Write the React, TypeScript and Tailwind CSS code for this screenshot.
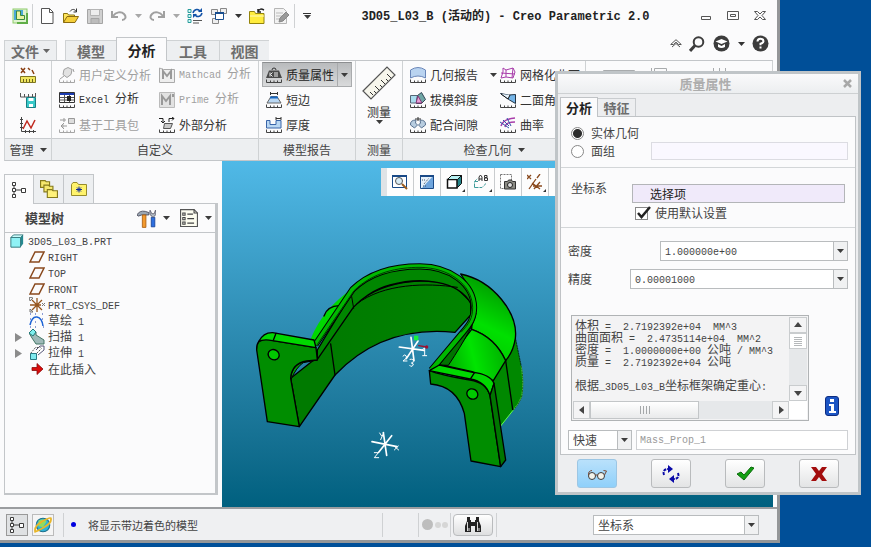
import React from "react";

const LATIN = "font-['Liberation_Mono',monospace]";

/* Latin runs are set in a smaller monospace so two letters fill one CJK cell. */
function Mix({ text, latin = "text-[10px]" }: { text: string; latin?: string }) {
  const runs = text.match(/[\u2e80-\uffef]+|[^\u2e80-\uffef]+/g) ?? [];
  return (
    <span className="whitespace-pre">
      {runs.map((run, i) =>
        /[\u2e80-\uffef]/.test(run) ? (
          <span key={i}>{run}</span>
        ) : (
          <span key={i} className={`${LATIN} ${latin}`}>{run}</span>
        )
      )}
    </span>
  );
}

function Caret({ className = "text-[#3c3c3c]" }: { className?: string }) {
  return (
    <svg width="7" height="4" viewBox="0 0 7 4" className={`shrink-0 ${className}`} aria-hidden="true">
      <path d="M0 0h7L3.5 4z" fill="currentColor" />
    </svg>
  );
}

function Icon({ children, size = 16 }: { children: React.ReactNode; size?: number }) {
  return (
    <svg width={size} height={size} viewBox="0 0 16 16" fill="none" className="shrink-0" aria-hidden="true">
      {children}
    </svg>
  );
}

/* Small graduated base line shared by all analysis icons. */
const Scale = ({ c = "#444" }: { c?: string }) => (
  <path d="M.5 12.5v3h15v-3M4.5 13.5v2M8 13.5v2M11.5 13.5v2" stroke={c} strokeWidth="1" />
);

const I = {
  logo: (
    <Icon>
      <rect x="1" y="1" width="14" height="14" fill="#dff3d0" stroke="#8ecb6b" />
      <rect x="2" y="2" width="9" height="10" fill="#4aa8d8" />
      <path d="M4.500 3v8.500h8v-4h-4v-4.500z" fill="#e8f3a0" stroke="#3a8a3f" />
      <path d="M15 5v10H5" stroke="#5fae47" strokeWidth="2" />
    </Icon>
  ),
  newFile: (
    <Icon>
      <path d="M2.500.5h8l3.500 3.500v11.500h-11.500z" fill="#fff" stroke="#555" />
      <path d="M10.500.5v4h3.500" stroke="#555" />
    </Icon>
  ),
  open: (
    <Icon>
      <path d="M.5 14.500v-9h4l1 1.500h6v2" fill="#ffe65c" stroke="#8b7410" />
      <path d="M.5 14.500l3.500-6h11.500l-3.500 6z" fill="#f5cf3a" stroke="#8b6b10" />
      <path d="M7 3.500c2-3 5-2.500 6 0M13.500.5v3.500h-3" stroke="#333" />
    </Icon>
  ),
  save: (
    <Icon>
      <path d="M.5 1.500h15v14h-15z" fill="#d0d0d0" stroke="#a5a5a5" />
      <path d="M3.500 1.500h9v6h-9z" fill="#eee" stroke="#b5b5b5" />
      <path d="M4 10.500h8v5h-8z" fill="#bcbcbc" stroke="#a5a5a5" />
    </Icon>
  ),
  undo: (
    <Icon>
      <path d="M1 3v6h6" stroke="#a0a0a0" strokeWidth="2" />
      <path d="M2 8c3-4 8-5 11-2s1 6-2 6" stroke="#a0a0a0" strokeWidth="2" />
    </Icon>
  ),
  redo: (
    <Icon>
      <path d="M15 3v6h-6" stroke="#a0a0a0" strokeWidth="2" />
      <path d="M14 8c-3-4-8-5-11-2s-1 6 2 6" stroke="#a0a0a0" strokeWidth="2" />
    </Icon>
  ),
  regen: (
    <Icon>
      <path d="M1 1.500h3v3h-3zM1 6.500h3v3h-3zM1 11.500h3v3h-3z" fill="#d7fbfb" stroke="#2a9b9b" />
      <path d="M6 12.500h9M6 15h6" stroke="#555" />
      <path d="M6 5c1-4 6-5 7-1M15 5c-1 4-6 5-7 1" stroke="#1353a8" strokeWidth="1.500" />
      <path d="M11 4h4v-4zM10 6h-4v4z" fill="#1353a8" />
    </Icon>
  ),
  windows: (
    <Icon>
      <path d="M.5 1.500h6v5h-6zM9.500.5h6v5h-6zM1.500 10.500h6v5h-6z" fill="#eee" stroke="#888" />
      <path d="M4.500 4.500h8v7h-8z" fill="#fff" stroke="#174d8f" />
      <path d="M4 5h9" stroke="#174d8f" strokeWidth="2" />
    </Icon>
  ),
  folder: (
    <Icon>
      <path d="M.5 15.500v-12h5l1 2h8.500v10z" fill="#ffec3d" stroke="#94840c" />
      <path d="M1 8h14" stroke="#fffbc0" />
      <path d="M9 4c1-4 4-3 6-2M9 1v3h3" stroke="#222" strokeWidth="1.500" />
    </Icon>
  ),
  edit: (
    <Icon>
      <path d="M1.500.5h9l3 3v12h-12z" fill="#f2f2f2" stroke="#b5b5b5" />
      <path d="M3 5h7M3 8h6M3 11h4" stroke="#bbb" />
      <path d="M6 14l1-4 6-6 3 3-6 6z" fill="#999" stroke="#888" />
    </Icon>
  ),
  angleRuler: (
    <Icon>
      <path d="M1 1l4 5M5 1l-4 5M8 1l2 2M12 3l2 4" stroke="#8a3f12" strokeWidth="1.500" />
      <path d="M.5 9.500h15v6h-15z" fill="#f0e65e" stroke="#7e7620" />
      <path d="M3.500 12v3M6.500 12v3M9.500 12v3M12.500 12v3" stroke="#6a6320" />
    </Icon>
  ),
  rulerSave: (
    <Icon>
      <path d="M.5 1v4h15v-4M4.500 2v3M8.500 2v3M12.500 2v3" stroke="#555" />
      <path d="M6.500 5.500h9v10h-9z" fill="#38c9c9" stroke="#187f83" />
      <path d="M8.500 6h5v3h-5zM9 12h4v3h-4z" fill="#fff" />
    </Icon>
  ),
  graph: (
    <Icon>
      <path d="M1.500 0v14.500h14.500M0 2.500h3M0 6.500h3M0 10.500h3M5.500 13v3M9.500 13v3M13.500 13v3" stroke="#444" />
      <path d="M3 12l4-8 4 7 4-8" stroke="#c02a20" strokeWidth="1.500" />
    </Icon>
  ),
  userDef: (
    <Icon>
      <path d="M5 2.500l4-2 4 2-1 5-4 3-4-3zM5 9l-4 3M14 2l1 3" fill="#e2e2e2" stroke="#a0a0a0" />
      <Scale c="#a5a5a5" />
    </Icon>
  ),
  excel: (
    <Icon>
      <path d="M.5.5h15v10h-15z" fill="#fff" stroke="#333" />
      <path d="M1 2h14" stroke="#1b3bb0" strokeWidth="2" />
      <path d="M1 5.500h14M1 8h14M5.500 3v7M10.500 3v7" stroke="#555" />
      <path d="M8 4h4v5h-4z" fill="#222" />
      <Scale />
    </Icon>
  ),
  toolkit: (
    <Icon>
      <path d="M9.500 1.500h6v5h-6zM8 9h-6M5 6L2 9l3 3M1 3h6M5 1v4" fill="#ddd" stroke="#999" />
      <Scale c="#a5a5a5" />
    </Icon>
  ),
  mathcad: (
    <Icon>
      <path d="M.5 1v14.500h15v-13h-11z" fill="#eee" stroke="#aaa" />
      <path d="M4 12v-8l4 5 4-5v8" stroke="#999" strokeWidth="2" />
    </Icon>
  ),
  prime: (
    <Icon>
      <path d="M.5.5h15v15h-15z" fill="#e2e2e2" stroke="#bbb" />
      <path d="M3 13v-9l4 5 4-5v9M14 2v3" stroke="#999" strokeWidth="2" />
    </Icon>
  ),
  external: (
    <Icon>
      <path d="M5.500 6.500h8l-2 5h-7z" fill="#c9c9c9" stroke="#555" />
      <path d="M0 1.500h4v4M2 4l2 2 2-2M10 5v-3.500h5M13 0l2 1.500-2 2" stroke="#222" />
      <Scale />
    </Icon>
  ),
  mass: (
    <Icon>
      <path d="M6 3a2 2 0 014 0" stroke="#333" />
      <path d="M3 3.500h10l3 7.500h-16z" fill="#4a4a4a" />
      <path d="M4 5.500v4M6.500 5.500l-2 2 2 2M9 5v5M11 5v5" stroke="#eee" />
      <Scale />
    </Icon>
  ),
  shortEdge: (
    <Icon>
      <path d="M4.500 0v3M11.500 0v3M4.500 1.500h7" stroke="#333" />
      <path d="M5 4.500h6l4 6.500h-14z" fill="#b9d7f3" stroke="#666" />
      <path d="M4 5.500h8" stroke="#1668c4" strokeWidth="2" />
      <Scale />
    </Icon>
  ),
  thick: (
    <Icon>
      <path d="M.5 3.500h3.500v4h6v-4h5v7.500h-14.500z" fill="#b9d7f3" stroke="#3864a8" />
      <path d="M10 0v3M15 0v3M10 1.500h5" stroke="#333" />
      <Scale />
    </Icon>
  ),
  geomReport: (
    <Icon>
      <path d="M.5 11v-8q7.500-5 15 0v8q-7.500-4-15 0z" fill="#b9d3f0" stroke="#6a86b8" />
      <Scale />
    </Icon>
  ),
  draft: (
    <Icon>
      <path d="M.5 3.500h7l-1 7.500h-6z" fill="#a9dcee" stroke="#567" />
      <path d="M7.500 3.500l4-3 4 7-4 4h-5z" fill="#6fa6a5" stroke="#345" />
      <path d="M8 4l4 7h-6z" fill="#e9a1d6" stroke="#833a78" />
      <Scale />
    </Icon>
  ),
  clearance: (
    <Icon>
      <path d="M6 3q-6 0-5.500 5l4 3 3-3-2-2zM10 3q6 0 5.500 5l-4 3-3-3 2-2z" fill="#b8cde0" stroke="#5a7290" />
      <path d="M8 0v4M5 2h6" stroke="#333" />
      <Scale />
    </Icon>
  ),
  mesh: (
    <Icon>
      <path d="M3 1l3 2 7-2 2 4-2 6-7-1-5 1 2-6zM6 3v7M1 6l14 1M13 1l-1 10" stroke="#a83caa" />
      <Scale />
    </Icon>
  ),
  dihedral: (
    <Icon>
      <path d="M.5 1.500l8 1.500 7-.500v9l-6-3.500z" fill="#75b5e8" stroke="#234" />
      <path d="M1 2l7 5 2-4" fill="#e5f2fc" stroke="#111" />
      <Scale />
    </Icon>
  ),
  curve: (
    <Icon>
      <path d="M15 1Q3 2 1 9M15 5Q6 5 5 10" stroke="#a83caa" strokeWidth="1.500" />
      <path d="M0 5l9 6M3 3l6 6M7 1l4 8" stroke="#3052a8" />
      <Scale />
    </Icon>
  ),
  tree: (
    <Icon>
      <path d="M1.500.5h3v3h-3zM1.500 6.500h3v3h-3zM1.500 12.500h3v3h-3zM10.500 6.500h4v4h-4z" fill="#fff" stroke="#3a3a3a" />
      <path d="M3 3.500v3M3 9.500v3M4.500 8h6" stroke="#3a3a3a" />
    </Icon>
  ),
  folders: (
    <Icon size={18}>
      <path d="M.5.5h4l1 1h3v5h-8z" fill="#f6e96e" stroke="#857a1c" />
      <path d="M3.500 4.500h4l1 1h3v5h-8z" fill="#f6e96e" stroke="#857a1c" />
      <path d="M6.500 8.500h4l1 1h4v6h-9z" fill="#fff27a" stroke="#857a1c" />
    </Icon>
  ),
  favFolder: (
    <Icon>
      <path d="M.5 14.500v-11l1.500-2h4l1.500 2h8v11z" fill="#fff36b" stroke="#978c2b" />
      <path d="M8 5.500v6M5 8.500h6M6 6.500l4 4M10 6.500l-4 4" stroke="#102a9c" />
    </Icon>
  ),
  tools: (
    <Icon size={19}>
      <path d="M0 5q2-4 7-3l3 1v2h-6l-3 1z" fill="#9aa6b2" stroke="#445" strokeWidth=".7" />
      <path d="M4.500 5h3v10.500h-3z" fill="#f39a2d" stroke="#a85b0e" strokeWidth=".7" />
      <path d="M12 7h3v8h-3z" fill="#2d6fdf" stroke="#123f96" strokeWidth=".7" />
      <path d="M11 1q-1 4 2.500 6q3.500-2 2-6l-1 3h-2z" fill="#b6bec7" stroke="#556" strokeWidth=".7" />
    </Icon>
  ),
  list: (
    <Icon size={18}>
      <path d="M.5.5h12l3 3v12h-15z" fill="#fdfdf0" stroke="#555" />
      <path d="M12.500.5v3h3M6.500 4.500h5M6.500 8.500h6M6.500 12.500h6" stroke="#444" />
      <path d="M2.500 3.500h2v2h-2zM2.500 7.500h2v2h-2zM2.500 11.500h2v2h-2z" stroke="#444" />
    </Icon>
  ),
  part: (
    <Icon size={14}>
      <path d="M1 4l3-3h11v10l-3 4H1z" fill="#25888f" />
      <path d="M1 4h11v11H1z" fill="#8ff2f5" stroke="#33777c" />
      <path d="M1 4l3-3h11l-3 3z" fill="#c9fbfb" stroke="#33777c" />
    </Icon>
  ),
  plane: (
    <Icon>
      <path d="M1 13L6 3h9l-5 10z" stroke="#8a4a1e" strokeWidth="1.500" />
    </Icon>
  ),
  csys: (
    <Icon>
      <path d="M8 1v14M1 8h11M3 13L13 3M3 3l10 10" stroke="#96561f" strokeWidth="1.300" />
      <path d="M0 0l4 1-3 3zM1 15v-3l3 3zM13 6l3 3M16 6l-3 3" stroke="#777" />
    </Icon>
  ),
  sketch: (
    <Icon>
      <path d="M1 12Q3 3 8 4t6 9" stroke="#1c63d6" strokeWidth="1.500" />
      <path d="M1 1h1M6 1h1M13 1h1M1 6h1M13 6h1M6 9h1M1 14h1M6 14h1M14 14h1" stroke="#1c3fb0" />
    </Icon>
  ),
  sweep: (
    <Icon>
      <path d="M0 4l4-4 3 3v3l8 5v4h-8l-4-6z" fill="#9fb9b8" stroke="#476" />
      <path d="M0 4l4-4 3 3-3 4z" fill="#7ff0ee" stroke="#277" />
    </Icon>
  ),
  extrude: (
    <Icon>
      <path d="M7 5l4-4h4v4l-6 5" fill="#fff" stroke="#557" />
      <path d="M1.500 8.500h6v6h-6z" fill="#7fe9ee" stroke="#267b86" />
      <path d="M1.500 8.500l5-6h5M7.500 8.500l5-5" stroke="#555" strokeDasharray="2 1" />
    </Icon>
  ),
  insert: (
    <Icon>
      <path d="M3 6.500h5v-4l6 5.500-6 5.500v-4h-5z" fill="#d90d0d" stroke="#8a0a0a" strokeWidth=".8" />
    </Icon>
  ),
  globe: (
    <Icon size={18}>
      <circle cx="8" cy="8" r="6" fill="#2fb3d8" stroke="#1b6f8c" />
      <path d="M4 4q5-2 7 1l-3 5-4-1z" fill="#8fdc60" />
      <path d="M1 14Q0 9 7 5t8-3Q16 6 9 10t-8 4z" stroke="#e8b62a" strokeWidth="1.600" />
    </Icon>
  ),
  zoom: (
    <Icon>
      <path d="M.5 1.500h14v12h-14z" fill="#fff" stroke="#1a4a87" />
      <path d="M0 2h15" stroke="#1a4a87" strokeWidth="2" />
      <circle cx="7" cy="7" r="3.500" fill="#d9ecf5" stroke="#555" />
      <path d="M10 10l5 5" stroke="#9c5d1e" strokeWidth="2" />
    </Icon>
  ),
  refit: (
    <Icon>
      <path d="M1.500 1.500h13v13h-13z" fill="#e6f1fb" stroke="#1a4a87" />
      <path d="M14 2v12H3z" fill="#6fa5dd" />
      <path d="M5 10l5-6M3 6h3M4 12h3" stroke="#456" strokeDasharray="1 1" />
      <path d="M1 2h14" stroke="#1a4a87" strokeWidth="2" />
    </Icon>
  ),
  cube: (
    <Icon>
      <path d="M1.500 5.500l4-4h10v8l-4 4z" fill="#258489" stroke="#111" />
      <path d="M1.500 5.500h9.500v8.500H1.500z" fill="#fff" stroke="#111" strokeWidth="1.500" />
      <path d="M1.500 5.500l4-4h10l-4 4z" fill="#b7f1f2" stroke="#111" />
    </Icon>
  ),
  viewAB: (
    <Icon>
      <path d="M1.500 13.500v-6l3-3M1.500 13.500h7.500l4-4M2 7.500h3" stroke="#3f9c9a" strokeDasharray="4 1" />
      <path d="M6 7v-4l1.500-2L9 3v4M6 5h3M11.500 1.500h2.500v2h-2.500zM11.500 4h3v2.500h-3z" stroke="#333" />
    </Icon>
  ),
  camera: (
    <Icon>
      <path d="M.5.5h11v14h-11z" fill="#fff" stroke="#777" strokeDasharray="2 1" />
      <path d="M4.500 7.500h3l1-1.500h3l1 1.500h3v7.500h-11z" fill="#8b8b84" stroke="#333" />
      <circle cx="10" cy="11" r="2.500" fill="#ddd" stroke="#222" />
    </Icon>
  ),
  datum: (
    <Icon>
      <path d="M0 1l4 4M4 1L0 5M13 0l-3 4M9 5L2 15M5 9l8 6M13 8l-6 7M6 12h9" stroke="#8a4a1e" strokeWidth="1.300" />
    </Icon>
  ),
};

type Tool = { icon: React.ReactNode; label: string; off?: boolean; caret?: boolean };

function ToolRow({ icon, label, off, caret }: Tool) {
  return (
    <button type="button" className={`flex h-[25px] items-center gap-1 leading-4 ${off ? "text-[#a0a0a0]" : "text-[#333]"}`}>
      {icon}
      <Mix text={label} />
      {caret && <span className="pl-2"><Caret /></span>}
    </button>
  );
}

function Group({ title, caret, className, children }: { title: string; caret?: boolean; className: string; children?: React.ReactNode }) {
  return (
    <section className={`flex shrink-0 flex-col border-r border-[#cfd2d4] ${className}`}>
      <div className="h-[77px] pt-px">{children}</div>
      <div className="flex h-[22px] items-center justify-center gap-[6px] border-t border-[#c9cccf] bg-[#edeff1] text-[#444]">
        {title}
        {caret && <Caret />}
      </div>
    </section>
  );
}

function Combo({ value, className, label, id, latin }: { value: string; className: string; label: string; id: string; latin?: boolean }) {
  return (
    <div className={`relative h-5 border border-[#b9bcbe] bg-white ${className}`}>
      <select id={id} aria-label={label} className={`h-full w-full appearance-none bg-transparent pl-1 text-[#444] outline-none ${latin ? `${LATIN} text-[10px]` : "text-xs leading-4"}`}>
        <option>{value}</option>
      </select>
      <span className="pointer-events-none absolute inset-y-0 right-0 flex w-[14px] items-center justify-center border-l border-[#b9bcbe] bg-[#f0f1f2]">
        <Caret />
      </span>
    </div>
  );
}

function QuickButton({ label, children }: { label: string; children: React.ReactNode }) {
  return <button type="button" aria-label={label} className="flex w-6 justify-center">{children}</button>;
}
function QuickCaret({ off }: { off?: boolean }) {
  return (
    <button type="button" aria-label="更多" className="flex w-[14px] justify-center">
      <Caret className={off ? "text-[#a8a8a8]" : "text-[#333]"} />
    </button>
  );
}

function TitleBar() {
  return (
    <header className="flex h-[31px] items-center pr-1 pl-[7px]">
      <span className="flex w-[25px] justify-center">{I.logo}</span>
      <span className="mr-[2px] h-6 w-px bg-[#cfd1d3]" />
      <QuickButton label="新建">{I.newFile}</QuickButton>
      <QuickButton label="打开">{I.open}</QuickButton>
      <QuickButton label="保存">{I.save}</QuickButton>
      <QuickButton label="撤消">{I.undo}</QuickButton>
      <QuickCaret off />
      <QuickButton label="重做">{I.redo}</QuickButton>
      <QuickCaret off />
      <QuickButton label="重新生成">{I.regen}</QuickButton>
      <QuickButton label="窗口">{I.windows}</QuickButton>
      <QuickCaret />
      <QuickButton label="关闭">{I.folder}</QuickButton>
      <QuickButton label="编辑">{I.edit}</QuickButton>
      <span className="ml-px h-6 w-px bg-[#cfd1d3]" />
      <button type="button" aria-label="自定义工具栏" className="flex w-6 flex-col items-center gap-px">
        <span className="h-px w-2 bg-[#333]" />
        <Caret />
      </button>
      <h1 className="flex-1 text-center font-bold whitespace-nowrap text-[#222]">
        <Mix text="3D05_L03_B (活动的) - Creo Parametric 2.0" latin="text-xs" />
      </h1>
      <button type="button" aria-label="最小化" className="flex w-[27px] justify-center">
        <svg width="12" height="12" fill="none" stroke="#555"><path d="M1.500 6.500h9v3h-9z" /></svg>
      </button>
      <button type="button" aria-label="最大化" className="flex w-[27px] justify-center">
        <svg width="12" height="12" fill="none" stroke="#555"><path d="M.5 1.500h11v8h-11zM3.500 4.500h5v2h-5z" /></svg>
      </button>
      <button type="button" aria-label="关闭窗口" className="flex w-[27px] justify-center">
        <svg width="12" height="12" fill="none" stroke="#555"><path d="M.5 1.500h3L6 4l2.500-2.500h3L8 5.500l3.500 4h-3L6 7 3.500 9.500h-3l3.500-4z" /></svg>
      </button>
    </header>
  );
}

function RibbonTabs() {
  const tab = "flex h-5 items-center justify-center border-t border-[#cfd2d4] bg-[#edeff1] text-sm leading-4 font-bold text-[#6e6e6e]";
  return (
    <nav className="flex h-[29px] items-end justify-between px-1">
      <div className="flex items-end" role="tablist">
        <button type="button" role="tab" className={`${tab} mr-2 w-[53px] gap-1 border-x`}>
          文件<Caret className="text-[#666]" />
        </button>
        <button type="button" role="tab" className={`${tab} w-[51px] border-l`}>模型</button>
        <button type="button" role="tab" aria-selected="true" className="z-10 -mb-px flex h-6 w-[51px] items-center justify-center border border-b-0 border-[#c3c6c9] bg-[#fbfbfc] text-sm leading-4 font-bold text-[#222]">分析</button>
        <button type="button" role="tab" className={`${tab} w-[52px]`}>工具</button>
        <button type="button" role="tab" className={`${tab} w-[50px] border-l`}>视图</button>
      </div>
      <div className="flex items-center self-start pt-1 text-[#333]">
        <button type="button" aria-label="折叠功能区" className="flex w-5 justify-center">
          <svg width="12" height="9" fill="none" stroke="#555"><path d="M.7 5.500L6 .7l5.300 4.800H8.500L6 3.200 3.500 5.500zM2 8l4-3.500L10 8" /></svg>
        </button>
        <button type="button" aria-label="搜索" className="flex w-[22px] justify-center">
          <svg width="16" height="16" fill="none" stroke="#3c3c3c"><circle cx="9.500" cy="6" r="4.800" strokeWidth="2" /><path d="M6 9.500L1 15" strokeWidth="3" /></svg>
        </button>
        <button type="button" aria-label="学习" className="flex w-[26px] justify-center">
          <svg width="17" height="17"><circle cx="8.500" cy="8.500" r="8" fill="#3c3c3c" /><path d="M2.500 6.500L8.500 4l6 2.500L8.500 9z" fill="#fff" /><path d="M5 9v3q3.500 2 7 0V9L8.500 11z" fill="#fff" /></svg>
        </button>
        <QuickCaret />
        <button type="button" aria-label="帮助" className="flex w-[25px] justify-center">
          <svg width="17" height="17"><circle cx="8.500" cy="8.500" r="8" fill="#3c3c3c" /><path d="M5.500 6.500Q5.500 3.700 8.500 3.700t3 2.600Q11.500 8 8.500 8.800v1.400" fill="none" stroke="#fff" strokeWidth="2" /><path d="M7.500 11.500h2v2h-2z" fill="#fff" /></svg>
        </button>
      </div>
    </nav>
  );
}

function Ribbon() {
  return (
    <div className="mx-1 flex overflow-hidden border border-t-[#c3c6c9] border-r-[#cfd2d4] border-b-[#c3c6c9] border-l-[#cfd2d4]">
      <Group title="管理" caret className="w-[47px]">
        <div className="flex flex-col items-center">
          {[I.angleRuler, I.rulerSave, I.graph].map((icon, i) => (
            <button type="button" key={i} aria-label={["测量历史", "保存分析", "图形"][i]} className="flex h-[25px] items-center">{icon}</button>
          ))}
        </div>
      </Group>
      <Group title="自定义" className="w-[207px]">
        <div className="grid grid-cols-[100px_1fr] pl-[7px]">
          <ToolRow icon={I.userDef} label="用户定义分析" off />
          <ToolRow icon={I.mathcad} label="Mathcad 分析" off />
          <ToolRow icon={I.excel} label="Excel 分析" />
          <ToolRow icon={I.prime} label="Prime 分析" off />
          <ToolRow icon={I.toolkit} label="基于工具包" off />
          <ToolRow icon={I.external} label="外部分析" />
        </div>
      </Group>
      <Group title="模型报告" className="w-[97px]">
        <div className="flex flex-col px-[3px]">
          <div className="flex h-[25px] border border-[#a9abad] border-t-[#8c8e90] bg-linear-to-b from-[#b9bbbd] to-[#d9dadb]">
            <button type="button" className="flex flex-1 items-center gap-1 pl-[3px] text-[#222]">
              {I.mass}<span>质量属性</span>
            </button>
            <button type="button" aria-label="质量属性选项" className="flex w-[14px] items-center justify-center border-l border-[#a9abad]"><Caret /></button>
          </div>
          <div className="pl-1">
            <ToolRow icon={I.shortEdge} label="短边" />
            <ToolRow icon={I.thick} label="厚度" />
          </div>
        </div>
      </Group>
      <Group title="测量" className="w-[47px]">
        <button type="button" className="flex w-full flex-col items-center pt-1 leading-4 text-[#333]">
          <svg width="34" height="34" viewBox="0 0 34 34" fill="none">
            <path d="M1 25L25 1l8 8L9 33z" fill="#f7f6ec" stroke="#555" strokeWidth="1.200" />
            <path d="M9 27l-3-3M12 25l-2-2M15 22l-4-4M18 19l-2-2M21 16l-4-4M24 13l-2-2M27 10l-4-4" transform="translate(2 2)" stroke="#333" />
          </svg>
          <span className="pt-1">测量</span>
          <Caret />
        </button>
      </Group>
      <Group title="检查几何" caret className="w-[183px]">
        <div className="grid grid-cols-[90px_1fr] pl-[7px]">
          <ToolRow icon={I.geomReport} label="几何报告" caret />
          <ToolRow icon={I.mesh} label="网格化曲面" />
          <ToolRow icon={I.draft} label="拔模斜度" />
          <ToolRow icon={I.dihedral} label="二面角" />
          <ToolRow icon={I.clearance} label="配合间隙" />
          <ToolRow icon={I.curve} label="曲率" caret />
        </div>
      </Group>
      <Group title="设计研究" className="w-[188px]">
        <svg width="180" height="32" fill="none" stroke="#a8abad" aria-hidden="true">
          <path d="M17.500 8.500h31v18h-31zM65.500 6v20M68.500 6.500h12v18h-12zM72 9.500h8M127.500 6v20M133.500 6v20M139.500 6v20" />
        </svg>
      </Group>
    </div>
  );
}

const treeRows = [
  { icon: I.plane, text: "RIGHT" },
  { icon: I.plane, text: "TOP" },
  { icon: I.plane, text: "FRONT" },
  { icon: I.csys, text: "PRT_CSYS_DEF" },
  { icon: I.sketch, text: "草绘 1" },
  { icon: I.sweep, text: "扫描 1", open: true },
  { icon: I.extrude, text: "拉伸 1", open: true },
  { icon: I.insert, text: "在此插入" },
];

function ModelTree() {
  const side = "flex w-[30px] items-center justify-center border-t border-r border-[#c3c6c9]";
  return (
    <aside className="flex w-[222px] shrink-0 flex-col px-1 pt-[13px] pb-3">
      <div className="flex h-[29px]">
        <button type="button" aria-label="模型树" className={`${side} z-10 -mb-px border-l bg-[#fbfbfc]`}>{I.tree}</button>
        <button type="button" aria-label="文件夹浏览器" className={`${side} bg-[#edeff1]`}>{I.folders}</button>
        <button type="button" aria-label="收藏夹" className={`${side} bg-[#edeff1]`}>{I.favFolder}</button>
      </div>
      <div className="flex-1 border border-r-[3px] border-b-2 border-[#c3c6c9] bg-[#fbfbfc]">
        <div className="flex h-[29px] items-center border-b border-[#c3c6c9] pr-[3px] pl-5">
          <h2 className="flex-1 text-[13px] leading-4 font-bold text-[#444]">模型树</h2>
          <button type="button" aria-label="设置" className="flex items-center gap-[7px]">{I.tools}<Caret /></button>
          <button type="button" aria-label="显示" className="ml-[10px] flex items-center gap-[7px]">{I.list}<Caret /></button>
        </div>
        <ul className="leading-4 text-[#444]">
          <li className="flex h-4 items-center gap-1 pl-[5px]">{I.part}<Mix text="3D05_L03_B.PRT" /></li>
          {treeRows.map((r) => (
            <li key={r.text} className="flex h-4 items-center pl-[10px]">
              <span className="flex w-[14px]">
                {r.open && <svg width="7" height="9"><path d="M0 0l7 4.500L0 9z" fill="#8c8c8c" /></svg>}
              </span>
              {r.icon}
              <span className="pl-[3px]"><Mix text={r.text} /></span>
            </li>
          ))}
        </ul>
      </div>
    </aside>
  );
}

function Model() {
  return (
    <svg width="551" height="346" viewBox="0 0 551 346" fill="none" className="block" role="img" aria-label="3D05_L03_B">
      <defs>
        <linearGradient id="bend" x1="690" y1="330" x2="790" y2="130" gradientUnits="userSpaceOnUse">
          <stop offset="0" stopColor="#00c400" />
          <stop offset=".5" stopColor="#00e000" />
          <stop offset="1" stopColor="#00a400" />
        </linearGradient>
        <linearGradient id="wall" x1="250" y1="0" x2="690" y2="0" gradientUnits="userSpaceOnUse">
          <stop offset="0" stopColor="#007a00" />
          <stop offset="1" stopColor="#008400" />
        </linearGradient>
        <linearGradient id="lower" x1="620" y1="340" x2="780" y2="300" gradientUnits="userSpaceOnUse">
          <stop offset="0" stopColor="#00a800" />
          <stop offset=".5" stopColor="#00e400" />
          <stop offset="1" stopColor="#00b800" />
        </linearGradient>
      </defs>
      <g transform="translate(18 89) scale(.33333)" stroke="#000" strokeWidth="4" strokeLinejoin="round" strokeLinecap="round">
        <path d="M335 118Q250 175 212 267L224 272L335 120z" fill="#00d800" stroke="none" />
        <path d="M252 198Q262 168 298 167" />
        <path d="M826 262L844 350Q852 400 845 440Q838 460 820 480L782 528L740 400z" fill="#008800" stroke="none" />
        <path d="M844 350Q852 400 845 440Q838 460 820 480L782 528" stroke="#5dff4c" strokeWidth="3" />
        <path d="M826 262L844 350Q852 400 845 440Q838 460 820 480" strokeWidth="2" strokeDasharray="4 4" />
        <path d="M662 72C760 92 835 190 826 265Q820 305 797 332Q765 262 695 238L700 130z" fill="url(#bend)" />
        <path d="M695 238Q765 262 797 332L760 392L700 366L612 346z" fill="url(#lower)" />
        <path d="M797 332L818 478" />
        <path d="M228 325L340 170C420 90 560 80 640 105L692 155L692 195L645 247C500 232 380 275 285 375L178 530L152 385z" fill="url(#wall)" />
        <path d="M272 282L285 375" />
        <path d="M232 300L335 130C400 65 470 52 540 52C620 54 690 95 704 165L692 160C655 90 540 80 450 105C400 118 360 150 340 172L232 328z" fill="#008600" />
        <path d="M350 162C430 100 560 98 652 112M335 140L341 175" strokeWidth="3" />
        <path d="M708 190Q705 225 625 346L598 345L680 235z" fill="#007400" strokeWidth="3" />
        <path d="M226 284L338 118C395 62 470 49 540 49C630 50 700 100 702 172C702 205 690 222 668 248L574 360" strokeWidth="19" strokeLinecap="butt" />
        <path d="M226 284L338 118C395 62 470 49 540 49C630 50 700 100 702 172C702 205 690 222 668 248L574 360" stroke="#00b800" strokeWidth="13" strokeLinecap="butt" />
        <path d="M230 286L342 122C399 66 474 52 540 52C626 53 696 102 698 172C698 205 688 220 664 246" strokeWidth="2" />
        <path d="M152 385L154 372Q165 338 200 333L232 330L190 338Q170 350 152 390z" fill="#009c00" strokeWidth="3" />
        <path d="M50 300Q48 268 78 266L100 272L228 293L232 330L200 333Q155 340 152 385L178 530L82 515z" fill="#008d00" />
        <path d="M56 275Q70 247 98 248L222 270L228 293L98 272Q70 266 56 275z" fill="#00d800" />
        <path d="M108 250L100 271" />
        <ellipse cx="101" cy="314" rx="17" ry="15" transform="rotate(30 101 314)" fill="#00c800" />
        <path d="M568 362Q600 375 690 390Q740 398 750 437L782 650L693 633L673 490Q650 408 572 402z" fill="#008d00" />
        <path d="M568 362L598 345L698 367Q750 372 762 400L750 437Q738 395 690 387z" fill="#00d800" />
        <path d="M704 367L692 386" />
        <path d="M750 437L762 400L797 630L782 650z" fill="#007600" />
        <ellipse cx="697" cy="432" rx="17" ry="15" transform="rotate(30 697 432)" fill="#00c800" />
        <g stroke="#fff">
          <path d="M478 291L552 301M513 262L522 332M534 273L499 326M396 575L471 590M430 548L440 616M455 557L416 607" strokeWidth="5" />
          <path d="M548 298l6-4v22M548 317h12M489 318q6-7 10 0t-10 15h12M510 328q12-2 10 6t-6 5q10 2 4 8t-9-1M419 549l6 9M431 549l-9 20M462 588l14 12M475 588l-12 12M403 608h12l-12 15h13" strokeWidth="3" />
        </g>
        <path d="M536 287L560 291" stroke="#9c1230" strokeWidth="4" />
        <circle cx="560" cy="291" r="5" fill="#9c1230" stroke="none" />
        <path d="M522 257h13v14h-13z" fill="#18f03c" stroke="none" />
      </g>
    </svg>
  );
}

function Viewport() {
  const views = [I.zoom, I.refit, I.cube, I.viewAB, I.camera, I.datum, null];
  const names = ["缩放", "重新调整", "显示样式", "已保存方向", "视图管理器", "基准显示", "注释显示"];
  return (
    <main className="relative mr-1 min-w-0 flex-1 overflow-hidden bg-linear-to-b from-[#50b9e7] to-[#00607f]">
      <Model />
      <div className="absolute top-[7px] left-[159px] flex h-7 border-l-[6px] border-[#dfe3e6] bg-white">
        {views.map((v, i) => (
          <button type="button" key={i} aria-label={names[i]} className="flex w-[27px] items-center justify-center border-r border-[#c9ccce] bg-[#fdfdfd]">
            {v}
            {(i === 2 || i === 3 || i === 5) && <svg width="3" height="3" className="-mr-[3px] self-end mb-1"><path d="M3 0v3H0z" fill="#333" /></svg>}
          </button>
        ))}
      </div>
    </main>
  );
}

function StatusBar() {
  const sep = "h-6 w-px shrink-0 bg-[#cfd1d3]";
  return (
    <footer className="flex h-[33px] shrink-0 items-center border-t-2 border-[#9b9da0] bg-[#eff0f2] pr-[18px] pl-[6px]">
      <button type="button" aria-label="导航器" className="flex h-[22px] w-[22px] items-center justify-center border border-[#999] bg-[#dfe1e3]">{I.tree}</button>
      <button type="button" aria-label="浏览器" className="ml-1 flex h-[22px] w-[22px] items-center justify-center border border-[#bbb] bg-[#f5f5f5]">{I.globe}</button>
      <span className={`${sep} ml-[9px]`} />
      <span className="ml-[7px] h-[5px] w-[5px] rounded-full bg-[#0000e0]" />
      <p className="ml-3 text-[11px] leading-4 text-[#444]">将显示带边着色的模型</p>
      <div className="flex flex-1 items-center justify-end">
        <span className={`${sep} mr-[35px]`} />
        <span className={`${sep} mr-[3px]`} />
        <span className="h-[11px] w-[11px] rounded-full bg-[#bdbdbd]" />
        <span className="ml-[2px] h-[6px] w-[6px] rounded-full bg-[#d6d6d6]" />
        <span className="ml-px h-[6px] w-[6px] rounded-full bg-[#d6d6d6]" />
        <span className={`${sep} mr-[2px] ml-[2px]`} />
        <button type="button" aria-label="查找" className="flex h-[22px] w-10 items-center justify-center rounded-sm border border-[#b9bbbd] bg-linear-to-b from-white to-[#dedfe0]">
          <svg width="16" height="15"><path d="M2 0h3v3h1v2h4V3h1V0h3v4l2 5v6h-6V9H6v6H0V9l2-5z" fill="#222" /><path d="M2.500 5v9M12.500 5v9M4 11v3M14 11v3" stroke="#d8d8d8" /></svg>
        </button>
        <span className={`${sep} ml-[3px]`} />
      </div>
      <Combo id="filter" label="过滤器" value="坐标系" className="ml-24 w-[166px]" />
    </footer>
  );
}

const results = [
  "体积 =  2.7192392e+04  MM^3",
  "曲面面积 =  2.4735114e+04  MM^2",
  "密度 =  1.0000000e+00 公吨 / MM^3",
  "质量 =  2.7192392e+04 公吨",
  "",
  "根据_3D05_L03_B坐标框架确定重心:",
];

function Arrow({ d, label, className }: { d: string; label: string; className: string }) {
  return (
    <button type="button" aria-label={label} className={`flex shrink-0 items-center justify-center border border-[#c9ccce] bg-[#f4f4f5] ${className}`}>
      <svg width="8" height="8"><path d={d} fill="#444" /></svg>
    </button>
  );
}

function Results() {
  return (
    <div className="grid h-[106px] w-[238px] grid-cols-[1fr_18px] grid-rows-[1fr_18px] border border-[#b0b3b5] bg-[#f3f3f4] p-px">
      <output className="block overflow-hidden pt-[2px] pl-[2px] leading-3 text-[#444]">
        {results.map((line, i) => (
          <div key={i} className="h-3"><Mix text={line} /></div>
        ))}
      </output>
      <div className="flex flex-col bg-[#e6e8ea]">
        <Arrow d="M0 6l4-5 4 5z" label="向上" className="h-4" />
        <div className="flex h-4 flex-col items-center justify-center gap-px border border-[#c9ccce] bg-white">
          {[0, 1, 2, 3, 4].map((i) => <span key={i} className="h-px w-2 bg-[#b5b8ba]" />)}
        </div>
        <div className="flex-1" />
        <Arrow d="M0 2l4 5 4-5z" label="向下" className="h-4" />
      </div>
      <div className="flex bg-[#e6e8ea]">
        <Arrow d="M6 0L1 4l5 4z" label="向左" className="w-[17px]" />
        <div className="flex w-[109px] items-center justify-center gap-[2px] border border-[#c3c6c8] bg-linear-to-b from-white to-[#e9eaeb]">
          {[0, 1, 2, 3].map((i) => <span key={i} className="h-2 w-px bg-[#a5a8aa]" />)}
        </div>
        <div className="flex-1" />
        <Arrow d="M2 0l5 4-5 4z" label="向右" className="w-[17px]" />
      </div>
      <div className="bg-white" />
    </div>
  );
}

function MassDialog() {
  const action = "flex h-[29px] w-10 items-center justify-center rounded-[3px] border";
  const plain = "border-[#b9bbbd] bg-linear-to-b from-white to-[#e3e4e5]";
  return (
    <section aria-label="质量属性" className="absolute top-[71px] right-[10px] z-20 w-[306px] border-[3px] border-[#c0c5c8] bg-[#edeef0]">
      <header className="flex h-5 items-center border-b border-[#cdd0d2] bg-linear-to-b from-[#fafafb] to-[#eceef0] pr-[6px] pl-[6px]">
        <h2 className="flex-1 pl-[4px] text-center text-[13px] leading-4 font-bold text-[#adadad]">质量属性</h2>
        <button type="button" aria-label="关闭对话框">
          <svg width="9" height="9"><path d="M1 1l7 7M8 1L1 8" stroke="#a8a8a8" strokeWidth="2.500" /></svg>
        </button>
      </header>
      <div className="flex h-[22px] items-end px-[2px]" role="tablist">
        <button type="button" role="tab" aria-selected="true" className="z-10 -mb-px flex h-5 w-[38px] items-center justify-center border border-b-0 border-[#c0c3c6] bg-[#fbfbfc] text-[13px] leading-4 font-bold text-[#222]">分析</button>
        <button type="button" role="tab" className="flex h-[18px] w-[38px] items-center justify-center border-t border-r border-[#c9cccf] text-[13px] leading-4 font-bold text-[#6e6e6e]">特征</button>
      </div>
      <div className="mx-[2px] border border-[#c0c3c6] bg-[#fbfbfc] pb-1 leading-4 text-[#444]">
        <div className="border-b border-[#d3d6d8] pt-[7px] pr-[7px] pb-[7px] pl-[10px]">
          <label className="flex h-[18px] items-center gap-[7px]">
            <input type="radio" name="scope" defaultChecked className="h-[13px] w-[13px] appearance-none rounded-full border border-[#888] bg-white checked:bg-[radial-gradient(#2b2b2b_0_4px,#fff_5px)]" />
            实体几何
          </label>
          <div className="flex h-[18px] items-center">
            <label className="flex w-20 items-center gap-[7px]">
              <input type="radio" name="scope" className="h-[13px] w-[13px] appearance-none rounded-full border border-[#888] bg-white" />
              面组
            </label>
            <input aria-label="面组" className="h-[18px] min-w-0 flex-1 border border-[#dcdce2] bg-[#faf8ff]" />
          </div>
        </div>
        <div className="border-b border-[#d3d6d8] pt-3 pr-[10px] pb-[6px] pl-[10px]">
          <div className="flex items-start">
            <label htmlFor="csys" className="w-[61px]">坐标系</label>
            <input id="csys" readOnly defaultValue="选择项" className="mt-1 h-[19px] min-w-0 flex-1 border border-[#b3b5b8] bg-[#f0eafa] pl-[17px] text-xs text-[#222]" />
          </div>
          <div className="mt-[2px] flex h-4 items-center pl-16">
            <label className="flex items-center gap-[7px]">
              <span className="relative flex">
                <input type="checkbox" defaultChecked className="h-[13px] w-[13px] appearance-none border border-[#888] bg-white" />
                <svg width="15" height="14" className="pointer-events-none absolute -top-px left-px"><path d="M2 7l3.500 4L14 1" fill="none" stroke="#222" strokeWidth="2.500" /></svg>
              </span>
              使用默认设置
            </label>
          </div>
        </div>
        <div className="pt-[13px] pr-[7px] pl-[7px]">
          <div className="flex h-5 items-center justify-between">
            <label htmlFor="density">密度</label>
            <Combo id="density" label="密度" value="1.000000e+00" latin className="w-[188px]" />
          </div>
          <div className="mt-2 flex h-5 items-center justify-between">
            <label htmlFor="accuracy">精度</label>
            <Combo id="accuracy" label="精度" value="0.00001000" latin className="w-[218px]" />
          </div>
          <div className="mt-[26px] flex items-end justify-between pr-[9px] pl-[3px]">
            <Results />
            <button type="button" aria-label="信息" className="mb-[5px]">
              <svg width="14" height="20"><rect x=".5" y=".5" width="13" height="19" rx="2.500" fill="#1c55c4" stroke="#0d2c80" /><path d="M5 3h4v3H5zM4 8h5v7h2v2H4v-2h2v-5H4z" fill="#fff" /></svg>
            </button>
          </div>
          <div className="mt-[9px] flex gap-1">
            <Combo id="mode" label="分析类型" value="快速" className="w-16 shrink-0" />
            <input aria-label="名称" defaultValue="Mass_Prop_1" className={`${LATIN} h-5 min-w-0 flex-1 border border-[#cfd1d4] bg-white px-[3px] text-[10px] text-[#999]`} />
          </div>
        </div>
      </div>
      <div className="flex gap-[34px] px-[19px] pt-1 pb-1">
        <button type="button" aria-label="预览" className={`${action} border-[#9cc6e4] bg-linear-to-b from-[#b9e1fb] to-[#8fd0fa]`}>
          <svg width="22" height="14" fill="none" stroke="#3b3b3b"><circle cx="6" cy="9" r="3.500" fill="#f3f3ea" /><circle cx="15" cy="9" r="3.500" fill="#f3f3ea" /><path d="M9 8h3M2.500 8Q2 4 6 3.500M18.500 8l2-4-3-.5" stroke="#7a4a35" /></svg>
        </button>
        <button type="button" aria-label="重复" className={`${action} ${plain}`}>
          <svg width="20" height="18" fill="none" stroke="#0a0aa8" strokeWidth="2"><path d="M3 10Q1 4 8 4M17 8q2 6-5 6" strokeDasharray="3 1" /><path d="M7 0l5 4-5 4zM13 10l-5 4 5 4z" fill="#0a0aa8" stroke="none" /></svg>
        </button>
        <button type="button" aria-label="确定" className={`${action} ${plain}`}>
          <svg width="18" height="15"><path d="M1 8l4-2 3 3 7-8 3 1L8 14z" fill="#12a012" stroke="#0b6a0b" /></svg>
        </button>
        <button type="button" aria-label="取消" className={`${action} ${plain}`}>
          <svg width="18" height="16"><path d="M1 1h5l3 4 3-4h5l-5 7 5 7h-5l-3-4-3 4H1l5-7z" fill="#a30d0d" /></svg>
        </button>
      </div>
    </section>
  );
}

export default function App() {
  return (
    <div className="relative h-screen overflow-hidden bg-[#004f98] pr-[91px] pb-1 font-['Noto_Sans_CJK_SC','Noto_Sans',sans-serif] text-xs leading-4">
      <div className="flex h-full flex-col border-r-[3px] border-b-[3px] border-[#949698] bg-[#fbfbfc]">
        <TitleBar />
        <RibbonTabs />
        <Ribbon />
        <div className="flex min-h-0 flex-1">
          <ModelTree />
          <Viewport />
        </div>
        <StatusBar />
      </div>
      <MassDialog />
    </div>
  );
}
